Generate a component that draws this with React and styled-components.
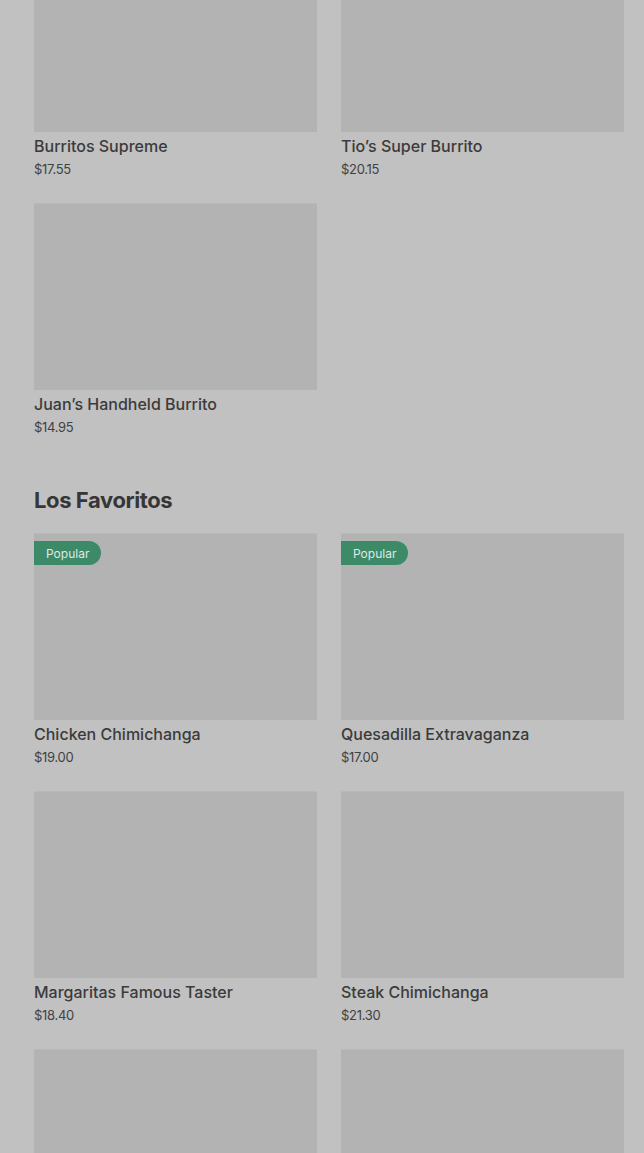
import React from 'react';
import styled, { createGlobalStyle } from 'styled-components';

const GlobalStyle = createGlobalStyle`
  html, body {
    margin: 0;
    padding: 0;
    background: #c1c1c1;
    font-family: Inter, "Open Sans", "Liberation Sans", sans-serif;
    overflow: hidden;
  }
`;

const Page = styled.main`
  padding: 0 20px 0 34px;
  margin-top: -55px;
  display: flex;
  flex-direction: column;
`;

const Section = styled.section`
  display: flex;
  flex-direction: column;
`;

const SectionTitle = styled.h2`
  margin: 49px 0 19px;
  font-size: 22px;
  line-height: 28px;
  font-weight: 700;
  letter-spacing: -0.4px;
  color: #363636;
`;

const Grid = styled.div`
  display: grid;
  grid-template-columns: 283px 283px;
  column-gap: 24px;
  row-gap: 24px;
`;

const Card = styled.article`
  display: flex;
  flex-direction: column;
  position: relative;
`;

const Thumb = styled.div`
  height: 187px;
  background: #b3b3b3;
  border-top: 1px solid #b9b9b9;
  box-sizing: border-box;
`;

const Badge = styled.span`
  position: absolute;
  top: 8px;
  left: 0;
  height: 24px;
  padding: 0 12px;
  display: flex;
  align-items: center;
  background: #3d8a69;
  color: #dfe9e4;
  font-size: 12px;
  border-radius: 0 12px 12px 0;
`;

const Name = styled.h3`
  margin: 3px 0 0;
  font-size: 16px;
  line-height: 22px;
  font-weight: 500;
  color: #3b3b3b;
`;

const Price = styled.p`
  margin: 2px 0 0;
  font-size: 13px;
  line-height: 20px;
  color: #424242;
  letter-spacing: -0.3px;
`;

const burritos = [
  { name: 'Burritos Supreme', price: '$17.55' },
  { name: 'Tio’s Super Burrito', price: '$20.15' },
  { name: 'Juan’s Handheld Burrito', price: '$14.95' },
];

const favoritos = [
  { name: 'Chicken Chimichanga', price: '$19.00', popular: true },
  { name: 'Quesadilla Extravaganza', price: '$17.00', popular: true },
  { name: 'Margaritas Famous Taster', price: '$18.40' },
  { name: 'Steak Chimichanga', price: '$21.30' },
  { name: '', price: '' },
  { name: '', price: '' },
];

const Item = ({ name, price, popular }) => (
  <Card>
    <Thumb />
    {popular && <Badge>Popular</Badge>}
    <Name>{name}</Name>
    <Price>{price}</Price>
  </Card>
);

export default function App() {
  return (
    <>
      <GlobalStyle />
      <Page>
        <Section>
          <Grid>
            {burritos.map(item => (
              <Item key={item.name} {...item} />
            ))}
          </Grid>
        </Section>
        <Section>
          <SectionTitle>Los Favoritos</SectionTitle>
          <Grid>
            {favoritos.map((item, i) => (
              <Item key={i} {...item} />
            ))}
          </Grid>
        </Section>
      </Page>
    </>
  );
}
